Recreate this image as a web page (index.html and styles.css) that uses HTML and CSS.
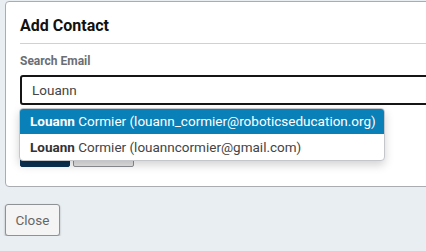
FILE: index.html
```html
<!DOCTYPE html>
<html>
<head>
<meta charset="utf-8">
<link rel="stylesheet" href="styles.css">
</head>
<body>
<div class="page">
  <div class="card">
    <h2 class="title">Add Contact</h2>
    <hr class="rule">
    <label class="label">Search Email</label>
    <div class="field">
      <div class="input">Louann</div>
      <ul class="dropdown">
        <li class="item active"><b>Louann</b> Cormier (louann_cormier@roboticseducation.org)</li>
        <li class="item"><b>Louann</b> Cormier (louanncormier@gmail.com)</li>
      </ul>
    </div>
    <div class="actions">
      <button class="btn btn-primary" aria-label="Add"></button>
      <button class="btn btn-secondary" aria-label="Cancel"></button>
    </div>
  </div>
  <button class="close">Close</button>
</div>
</body>
</html>
```
FILE: styles.css
```css
html, body {
  margin: 0;
  padding: 0;
  background: #e9eef2;
  overflow: hidden;
  font-family: Roboto, "Liberation Sans", sans-serif;
}
.page {
  padding: 1px 0 0 5px;
  width: 480px;
}
.card {
  background: #fff;
  border: 1px solid #a9adb1;
  border-radius: 4px;
  padding: 15px 14px 19px 14px;
}
.title {
  margin: 0;
  font-size: 16px;
  line-height: 18px;
  font-weight: 700;
  color: #111;
}
.rule {
  margin: 8px 0 0 0;
  border: 0;
  border-top: 1px solid #cfd2d5;
  height: 0;
}
.label {
  display: block;
  margin-top: 10px;
  font-size: 12px;
  line-height: 15px;
  font-weight: 700;
  color: #6b6e72;
}
.field {
  position: relative;
  margin-top: 6px;
}
.input {
  height: 26px;
  border: 2px solid #151515;
  border-radius: 3px;
  padding: 0 10px;
  font-size: 13.5px;
  line-height: 26px;
  color: #444;
}
.dropdown {
  position: absolute;
  top: 33px;
  left: -1px;
  width: 364px;
  margin: 0;
  padding: 0;
  list-style: none;
  background: #fff;
  border: 1px solid #c4c7ca;
  border-radius: 4px;
  overflow: hidden;
  box-shadow: 0 4px 10px rgba(0, 0, 0, 0.18);
  z-index: 2;
}
.item {
  padding: 0 10px;
  height: 26px;
  line-height: 26px;
  font-size: 13.5px;
  color: #444;
  white-space: nowrap;
}
.item b {
  color: #333;
}
.item.active {
  height: 25px;
  line-height: 25px;
  background: #0a80b9;
  color: #fff;
}
.item.active b {
  color: #fff;
}
.actions {
  display: flex;
  gap: 3px;
  margin-top: 32px;
}
.btn {
  height: 30px;
  margin: 0;
  padding: 0;
  font-family: inherit;
  font-size: 13px;
  border-radius: 2px;
}
.btn-primary {
  width: 50px;
  background: #0b3253;
  border: 1px solid #0b3253;
}
.btn-secondary {
  width: 61px;
  background: #e6e6e6;
  border: 1px solid #8e9194;
}
.close {
  display: block;
  margin-top: 17px;
  width: 55px;
  height: 32px;
  background: #f4f4f4;
  border: 1px solid #8f9295;
  border-radius: 3px;
  box-shadow: 0 1px 2px rgba(0, 0, 0, 0.3);
  font-family: inherit;
  font-size: 13.5px;
  color: #666;
  padding: 0;
}
```
